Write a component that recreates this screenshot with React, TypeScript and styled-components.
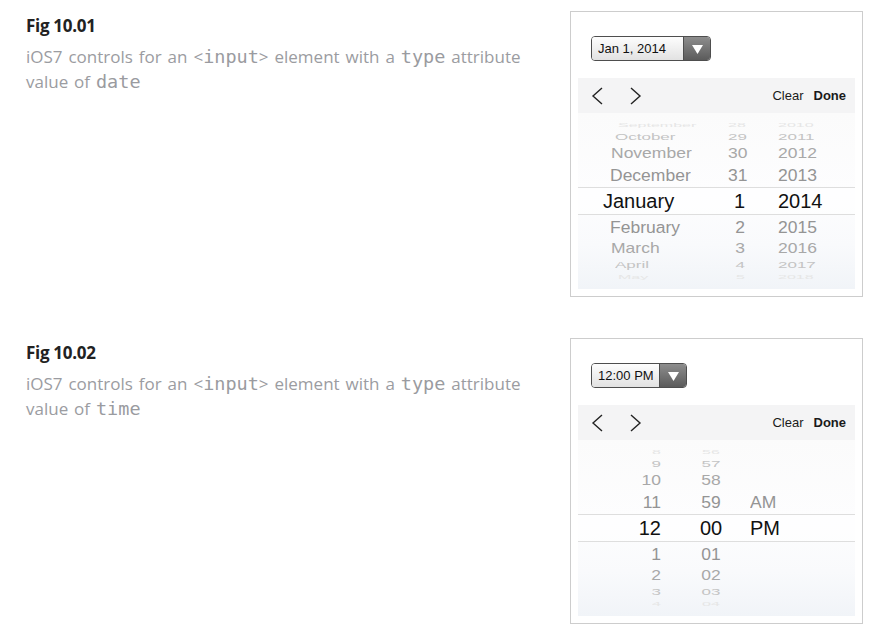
import React from "react";
import styled, { createGlobalStyle } from "styled-components";

const GlobalStyle = createGlobalStyle`
  body {
    margin: 0;
    background: #fff;
    font-family: "Open Sans", "Noto Sans", sans-serif;
  }
`;

type Level = 0 | 1 | 2 | 3 | 4 | 5;

// wheel rows shrink vertically the further they sit from the selection band
const rowHeights = [28, 24, 19, 14, 10, 7];
const fontSizes = [20, 17.5, 17.5, 17, 16, 16];
const squash = [1, 0.95, 0.8, 0.55, 0.3, 0.15];
const colors = ["#111", "#949494", "#a8a8a8", "#c4c4c4", "#e6e6e6", "#f2f2f2"];

const Page = styled.div`
  display: flex;
  flex-direction: column;
  gap: 41px;
  padding: 11px 17px 10px 26px;
`;

const Figure = styled.section`
  display: grid;
  grid-template-columns: 1fr 293px;
  align-items: start;
`;

const Text = styled.div`
  padding-top: 4px;
`;

const Title = styled.h3`
  margin: 0 0 7px;
  font-size: 17px;
  line-height: 22px;
  font-weight: 700;
  color: #222;
  letter-spacing: -0.3px;
`;

const Caption = styled.p`
  margin: 0;
  max-width: 520px;
  font-size: 17px;
  line-height: 25px;
  color: #9b9ca1;
  word-spacing: 1.5px;

  code {
    font-family: "DejaVu Sans Mono", "Liberation Mono", monospace;
    font-size: 18.5px;
    line-height: 1;
    word-spacing: 0;
    color: #9a9ba0;
  }
`;

const Shot = styled.div`
  border: 1px solid #cdcdcd;
  padding: 7px;
  font-family: "Liberation Sans", Arial, sans-serif;
`;

const Select = styled.div`
  display: inline-flex;
  align-items: stretch;
  height: 23px;
  margin: 17px 0 17px 13px;
  border: 1px solid #4e4e4e;
  border-radius: 4px;
  overflow: hidden;
`;

const SelectValue = styled.div<{ $width: number }>`
  box-sizing: border-box;
  width: ${(p) => p.$width}px;
  padding-left: 6px;
  display: flex;
  align-items: center;
  font-size: 13px;
  color: #111;
  background: linear-gradient(#fdfdfd, #e2e2e2);
  border-right: 1px solid #4e4e4e;
`;

const SelectArrow = styled.div`
  width: 26px;
  display: flex;
  align-items: center;
  justify-content: center;
  background: linear-gradient(#8d8d8d, #5b5b5b);
`;

const Toolbar = styled.div`
  height: 35px;
  display: flex;
  align-items: center;
  padding: 0 9px 0 13px;
  background: #f4f4f5;
`;

const NavButtons = styled.div`
  display: flex;
  gap: 25px;
  flex: 1;
`;

const ToolAction = styled.span<{ $bold?: boolean }>`
  font-size: 13px;
  color: #1a1a1a;
  font-weight: ${(p) => (p.$bold ? 700 : 400)};
  margin-left: ${(p) => (p.$bold ? 10 : 0)}px;
`;

const Wheel = styled.div`
  display: flex;
  flex-direction: column;
  background: linear-gradient(#fbfbfb 0%, #fdfdfe 45%, #f9fafc 75%, #f1f4f8 100%);
`;

const Row = styled.div<{ $level: Level; $cols: string }>`
  display: grid;
  grid-template-columns: ${(p) => p.$cols};
  height: ${(p) => rowHeights[p.$level]}px;
  align-items: center;
  font-size: ${(p) => fontSizes[p.$level]}px;
  color: ${(p) => colors[p.$level]};
  line-height: ${(p) => rowHeights[p.$level]}px;
  white-space: nowrap;
  ${(p) =>
    p.$level === 0
      ? "background: rgba(255,255,255,0.6); border-top: 1px solid #dedede; border-bottom: 1px solid #dedede; height: 26px; line-height: 26px;"
      : ""}

  span {
    display: block;
    transform: scaleY(${(p) => squash[p.$level]});
  }
`;

const Cell = styled.span<{ $align: "left" | "right" | "center"; $pad?: number; $padRight?: number }>`
  text-align: ${(p) => p.$align};
  padding-left: ${(p) => p.$pad ?? 0}px;
  padding-right: ${(p) => p.$padRight ?? 0}px;
`;

const Chevron = ({ dir }: { dir: "left" | "right" }) => (
  <svg width="13" height="18" viewBox="0 0 13 18" fill="none">
    <polyline
      points={dir === "left" ? "11,1 2,9 11,17" : "2,1 11,9 2,17"}
      stroke="#222"
      strokeWidth="1.4"
    />
  </svg>
);

const Triangle = () => (
  <svg width="11" height="10" viewBox="0 0 11 10">
    <polygon points="0,1 11,1 5.5,10" fill="#fff" />
  </svg>
);

// level 5 rows are the faint edges of the wheel, left empty
const dateRows: { level: Level; m: string; d: string; y: string }[] = [
  { level: 5, m: "", d: "", y: "" },
  { level: 4, m: "September", d: "28", y: "2010" },
  { level: 3, m: "October", d: "29", y: "2011" },
  { level: 2, m: "November", d: "30", y: "2012" },
  { level: 1, m: "December", d: "31", y: "2013" },
  { level: 0, m: "January", d: "1", y: "2014" },
  { level: 1, m: "February", d: "2", y: "2015" },
  { level: 2, m: "March", d: "3", y: "2016" },
  { level: 3, m: "April", d: "4", y: "2017" },
  { level: 4, m: "May", d: "5", y: "2018" },
  { level: 5, m: "", d: "", y: "" },
];

const monthPad = [25, 32, 33, 37, 40, 42];

const timeRows: { level: Level; h: string; m: string; p: string }[] = [
  { level: 5, h: "", m: "", p: "" },
  { level: 4, h: "8", m: "56", p: "" },
  { level: 3, h: "9", m: "57", p: "" },
  { level: 2, h: "10", m: "58", p: "" },
  { level: 1, h: "11", m: "59", p: "AM" },
  { level: 0, h: "12", m: "00", p: "PM" },
  { level: 1, h: "1", m: "01", p: "" },
  { level: 2, h: "2", m: "02", p: "" },
  { level: 3, h: "3", m: "03", p: "" },
  { level: 4, h: "4", m: "04", p: "" },
  { level: 5, h: "", m: "", p: "" },
];

const PickerBar = () => (
  <Toolbar>
    <NavButtons>
      <Chevron dir="left" />
      <Chevron dir="right" />
    </NavButtons>
    <ToolAction>Clear</ToolAction>
    <ToolAction $bold>Done</ToolAction>
  </Toolbar>
);

const DatePicker = () => (
  <Shot>
    <Select>
      <SelectValue $width={92}>Jan 1, 2014</SelectValue>
      <SelectArrow>
        <Triangle />
      </SelectArrow>
    </Select>
    <PickerBar />
    <Wheel>
      {dateRows.map((r, i) => (
        <Row key={i} $level={r.level} $cols="150px 17px 1fr">
          <Cell $align="left" $pad={monthPad[r.level]}>
            {r.m}
          </Cell>
          <Cell $align="right">{r.d}</Cell>
          <Cell $align="left" $pad={33}>
            {r.y}
          </Cell>
        </Row>
      ))}
    </Wheel>
  </Shot>
);

const TimePicker = () => (
  <Shot>
    <Select>
      <SelectValue $width={68}>12:00 PM</SelectValue>
      <SelectArrow>
        <Triangle />
      </SelectArrow>
    </Select>
    <PickerBar />
    <Wheel>
      {timeRows.map((r, i) => (
        <Row key={i} $level={r.level} $cols="108px 50px 1fr">
          <Cell $align="right" $padRight={25}>
            {r.h}
          </Cell>
          <Cell $align="center">{r.m}</Cell>
          <Cell $align="left" $pad={14}>
            {r.p}
          </Cell>
        </Row>
      ))}
    </Wheel>
  </Shot>
);

const App: React.FC = () => {
  return (
    <>
      <GlobalStyle />
      <Page>
        <Figure>
          <Text>
            <Title>Fig 10.01</Title>
            <Caption>
              iOS7 controls for an &lt;<code>input</code>&gt; element with a <code>type</code> attribute value
              of <code>date</code>
            </Caption>
          </Text>
          <DatePicker />
        </Figure>
        <Figure>
          <Text>
            <Title>Fig 10.02</Title>
            <Caption>
              iOS7 controls for an &lt;<code>input</code>&gt; element with a <code>type</code> attribute value
              of <code>time</code>
            </Caption>
          </Text>
          <TimePicker />
        </Figure>
      </Page>
    </>
  );
};

export default App;
